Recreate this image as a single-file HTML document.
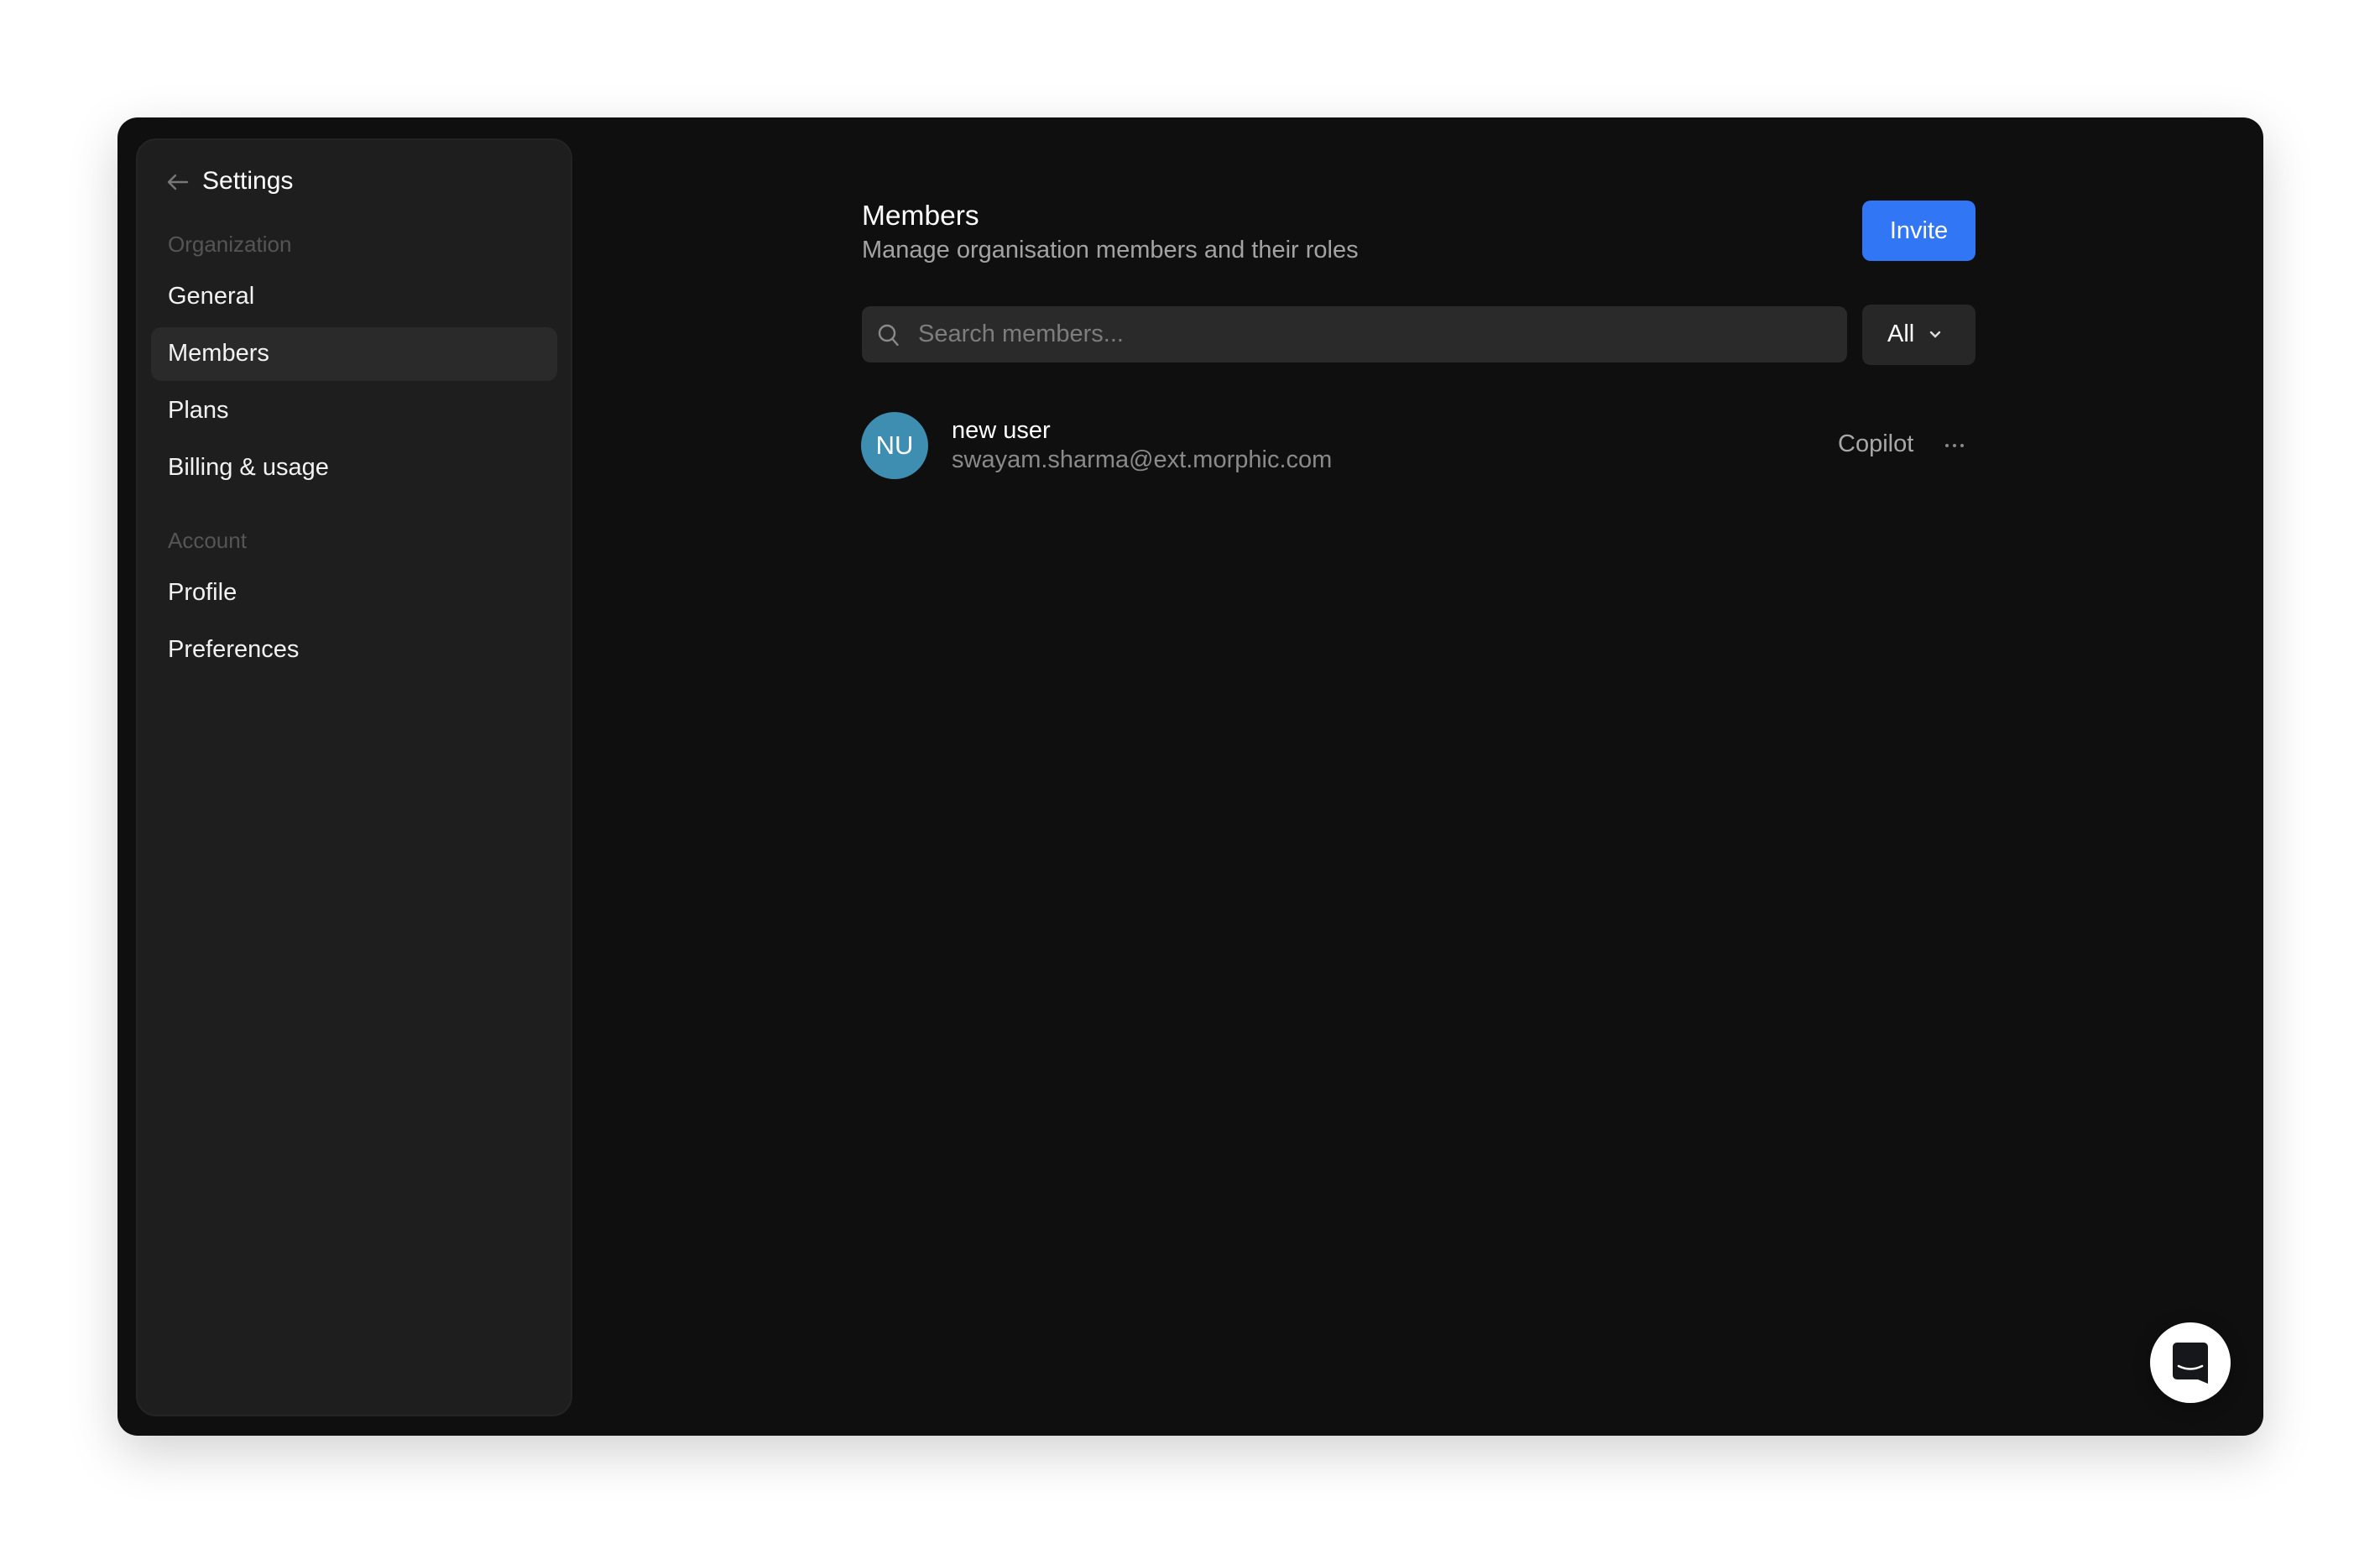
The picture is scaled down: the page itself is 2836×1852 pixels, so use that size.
<!DOCTYPE html>
<html><head><meta charset="utf-8"><style>
*{margin:0;padding:0;box-sizing:border-box}
body{width:2836px;height:1852px;background:#fff;font-family:"Liberation Sans",sans-serif;position:relative;overflow:hidden}
.frame{position:absolute;left:140px;top:140px;width:2557px;height:1571px;background:#0f0f0f;border-radius:24px;box-shadow:0 20px 60px rgba(0,0,0,0.18)}
.side{position:absolute;left:162px;top:165px;width:520px;height:1523px;background:#1e1e1e;border:2px solid #242424;border-radius:24px}
.t{position:absolute;white-space:nowrap;line-height:1}
.item{font-size:29px;color:#f2f2f2;left:200px}
.sec{font-size:26px;color:#555;left:200px}
.hl{position:absolute;left:180px;top:390px;width:484px;height:64px;background:#2a2a2a;border-radius:12px}
</style></head><body>
<div class="frame"></div>
<div class="side"></div>
<div class="hl"></div>
<svg style="position:absolute;left:198px;top:205px" width="28" height="24" viewBox="0 0 28 24"><path d="M25 12H3M11 4L3 12l8 8" stroke="#777" stroke-width="2.4" fill="none" stroke-linecap="round" stroke-linejoin="round"/></svg>
<div class="t" style="left:241px;top:201px;font-size:30px;color:#fff">Settings</div>
<div class="t sec" style="top:278px">Organization</div>
<div class="t item" style="top:339px">General</div>
<div class="t item" style="top:407px">Members</div>
<div class="t item" style="top:475px">Plans</div>
<div class="t item" style="top:543px">Billing &amp; usage</div>
<div class="t sec" style="top:631px">Account</div>
<div class="t item" style="top:692px">Profile</div>
<div class="t item" style="top:760px">Preferences</div>

<div class="t" style="left:1027px;top:241px;font-size:33.5px;color:#fff">Members</div>
<div class="t" style="left:1027px;top:284px;font-size:29px;color:#a3a3a3">Manage organisation members and their roles</div>
<div style="position:absolute;left:2219px;top:239px;width:135px;height:72px;background:#3076f5;border-radius:10px;color:#fff;font-size:29px;line-height:72px;text-align:center">Invite</div>
<div style="position:absolute;left:1027px;top:365px;width:1174px;height:67px;background:#2a2a2a;border-radius:10px"></div>
<svg style="position:absolute;left:1045px;top:385px" width="28" height="30" viewBox="0 0 28 30"><circle cx="12" cy="12" r="9" stroke="#8a8a8a" stroke-width="2.4" fill="none"/><path d="M18.5 19l6 7" stroke="#8a8a8a" stroke-width="2.4" stroke-linecap="round"/></svg>
<div class="t" style="left:1094px;top:384px;font-size:29px;color:#7d7d7d">Search members...</div>
<div style="position:absolute;left:2219px;top:363px;width:135px;height:72px;background:#272727;border-radius:10px"></div>
<div class="t" style="left:2249px;top:384px;font-size:29px;color:#fff">All</div>
<svg style="position:absolute;left:2298px;top:393px" width="16" height="12" viewBox="0 0 16 12"><path d="M3 3l5 5 5-5" stroke="#ddd" stroke-width="2.4" fill="none" stroke-linecap="round"/></svg>

<div style="position:absolute;left:1026px;top:491px;width:80px;height:80px;border-radius:50%;background:#3d8eb0;color:#fff;font-size:31px;line-height:80px;text-align:center">NU</div>
<div class="t" style="left:1134px;top:499px;font-size:29px;color:#fff">new user</div>
<div class="t" style="left:1134px;top:534px;font-size:29px;color:#8a8a8a">swayam.sharma@ext.morphic.com</div>
<div class="t" style="left:2190px;top:515px;font-size:29px;color:#a8a8a8">Copilot</div>
<svg style="position:absolute;left:2316px;top:527px" width="28" height="8" viewBox="0 0 28 8"><circle cx="4" cy="4" r="2" fill="#8a8a8a"/><circle cx="13" cy="4" r="2" fill="#8a8a8a"/><circle cx="22" cy="4" r="2" fill="#8a8a8a"/></svg>

<div style="position:absolute;left:2562px;top:1576px;width:96px;height:96px;border-radius:50%;background:#fff;box-shadow:0 4px 20px rgba(0,0,0,0.3)"></div>
<svg style="position:absolute;left:2587px;top:1598px" width="48" height="54" viewBox="0 0 48 54"><path d="M7 2h32a5 5 0 0 1 5 5v44l-12-5H7a5 5 0 0 1-5-5V7a5 5 0 0 1 5-5z" fill="#16171a"/><path d="M9 30q14 7 28 0" stroke="#fff" stroke-width="2.6" fill="none" stroke-linecap="round"/></svg>
</body></html>
